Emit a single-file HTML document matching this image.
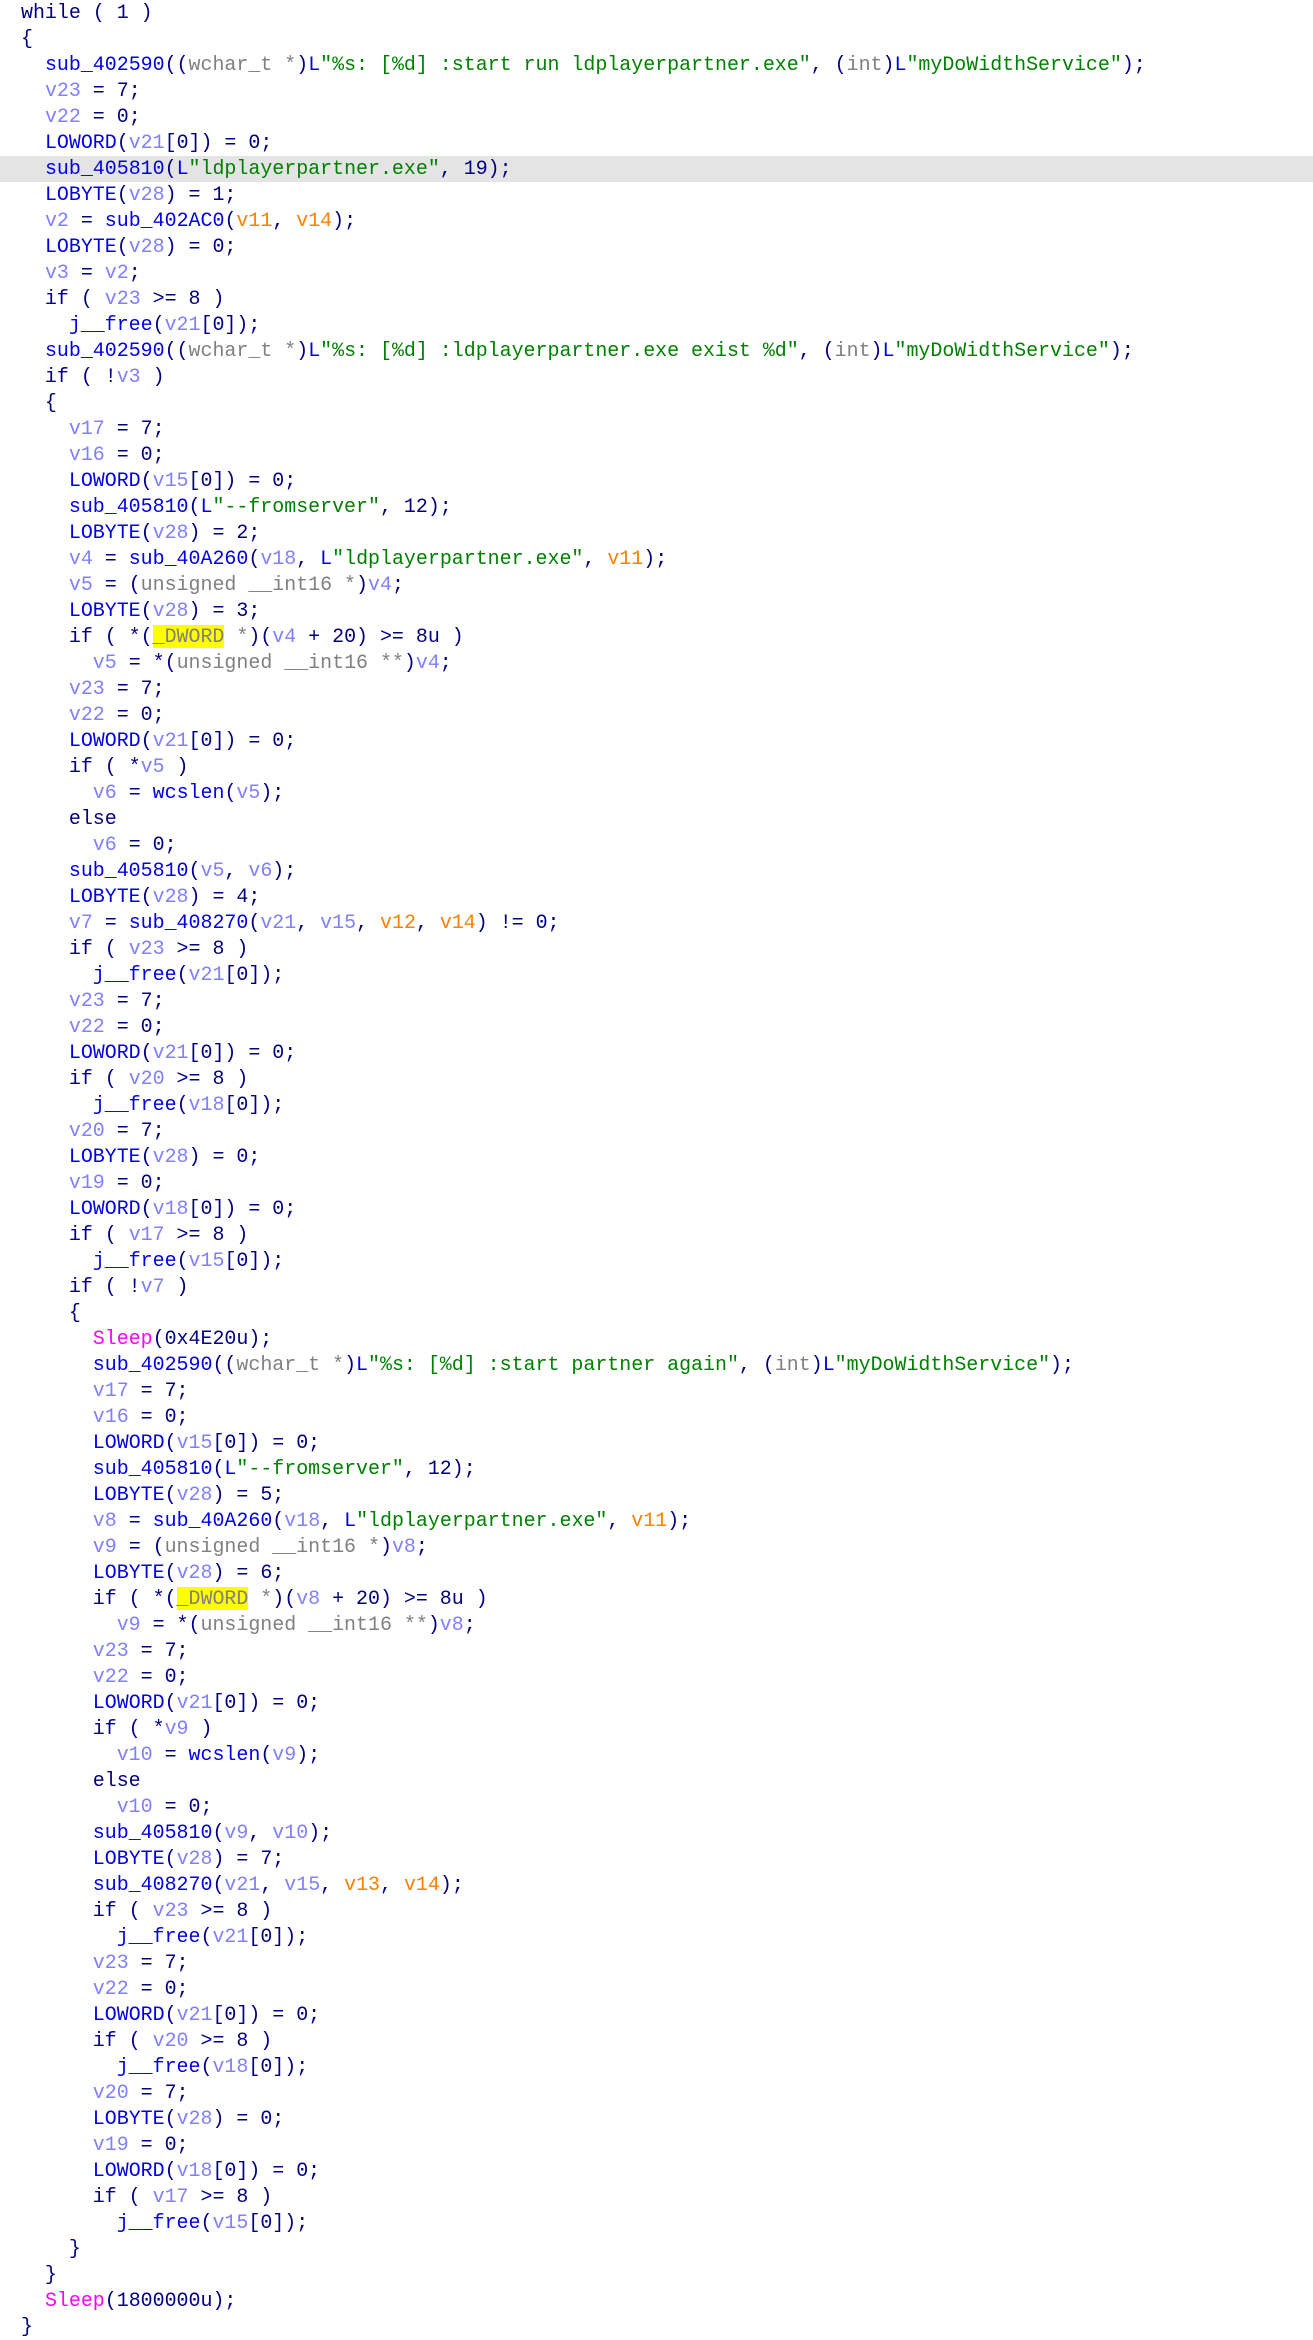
<!DOCTYPE html>
<html><head><meta charset="utf-8"><style>
body{margin:0;background:#fff;width:1313px;height:2327px;overflow:hidden;position:relative}
.hl{position:absolute;left:0;top:156px;width:1313px;height:26px;background:#e4e4e4}
pre{position:absolute;left:21px;top:0;margin:0;font-family:"Liberation Mono",monospace;font-size:19.95px;line-height:26px;color:#000080}
.f{color:#0000e6}.v{color:#8080ff}.s{color:#008000}.a{color:#ff8000}.t{color:#808080}.m{color:#ff00ff}.y{background:#ffff00;color:#808080}
</style></head><body><div class="hl"></div><pre>while ( 1 )
{
  <span class="f">sub_402590</span>((<span class="t">wchar_t *</span>)<span class="f">L</span><span class="s">"%s: [%d] :start run ldplayerpartner.exe"</span>, (<span class="t">int</span>)<span class="f">L</span><span class="s">"myDoWidthService"</span>);
  <span class="v">v23</span> = 7;
  <span class="v">v22</span> = 0;
  <span class="f">LOWORD</span>(<span class="v">v21</span>[0]) = 0;
  <span class="f">sub_405810</span>(<span class="f">L</span><span class="s">"ldplayerpartner.exe"</span>, 19);
  <span class="f">LOBYTE</span>(<span class="v">v28</span>) = 1;
  <span class="v">v2</span> = <span class="f">sub_402AC0</span>(<span class="a">v11</span>, <span class="a">v14</span>);
  <span class="f">LOBYTE</span>(<span class="v">v28</span>) = 0;
  <span class="v">v3</span> = <span class="v">v2</span>;
  if ( <span class="v">v23</span> &gt;= 8 )
    <span class="f">j__free</span>(<span class="v">v21</span>[0]);
  <span class="f">sub_402590</span>((<span class="t">wchar_t *</span>)<span class="f">L</span><span class="s">"%s: [%d] :ldplayerpartner.exe exist %d"</span>, (<span class="t">int</span>)<span class="f">L</span><span class="s">"myDoWidthService"</span>);
  if ( !<span class="v">v3</span> )
  {
    <span class="v">v17</span> = 7;
    <span class="v">v16</span> = 0;
    <span class="f">LOWORD</span>(<span class="v">v15</span>[0]) = 0;
    <span class="f">sub_405810</span>(<span class="f">L</span><span class="s">"--fromserver"</span>, 12);
    <span class="f">LOBYTE</span>(<span class="v">v28</span>) = 2;
    <span class="v">v4</span> = <span class="f">sub_40A260</span>(<span class="v">v18</span>, <span class="f">L</span><span class="s">"ldplayerpartner.exe"</span>, <span class="a">v11</span>);
    <span class="v">v5</span> = (<span class="t">unsigned __int16 *</span>)<span class="v">v4</span>;
    <span class="f">LOBYTE</span>(<span class="v">v28</span>) = 3;
    if ( *(<span class="y">_DWORD</span><span class="t"> *</span>)(<span class="v">v4</span> + 20) &gt;= 8u )
      <span class="v">v5</span> = *(<span class="t">unsigned __int16 **</span>)<span class="v">v4</span>;
    <span class="v">v23</span> = 7;
    <span class="v">v22</span> = 0;
    <span class="f">LOWORD</span>(<span class="v">v21</span>[0]) = 0;
    if ( *<span class="v">v5</span> )
      <span class="v">v6</span> = <span class="f">wcslen</span>(<span class="v">v5</span>);
    else
      <span class="v">v6</span> = 0;
    <span class="f">sub_405810</span>(<span class="v">v5</span>, <span class="v">v6</span>);
    <span class="f">LOBYTE</span>(<span class="v">v28</span>) = 4;
    <span class="v">v7</span> = <span class="f">sub_408270</span>(<span class="v">v21</span>, <span class="v">v15</span>, <span class="a">v12</span>, <span class="a">v14</span>) != 0;
    if ( <span class="v">v23</span> &gt;= 8 )
      <span class="f">j__free</span>(<span class="v">v21</span>[0]);
    <span class="v">v23</span> = 7;
    <span class="v">v22</span> = 0;
    <span class="f">LOWORD</span>(<span class="v">v21</span>[0]) = 0;
    if ( <span class="v">v20</span> &gt;= 8 )
      <span class="f">j__free</span>(<span class="v">v18</span>[0]);
    <span class="v">v20</span> = 7;
    <span class="f">LOBYTE</span>(<span class="v">v28</span>) = 0;
    <span class="v">v19</span> = 0;
    <span class="f">LOWORD</span>(<span class="v">v18</span>[0]) = 0;
    if ( <span class="v">v17</span> &gt;= 8 )
      <span class="f">j__free</span>(<span class="v">v15</span>[0]);
    if ( !<span class="v">v7</span> )
    {
      <span class="m">Sleep</span>(0x4E20u);
      <span class="f">sub_402590</span>((<span class="t">wchar_t *</span>)<span class="f">L</span><span class="s">"%s: [%d] :start partner again"</span>, (<span class="t">int</span>)<span class="f">L</span><span class="s">"myDoWidthService"</span>);
      <span class="v">v17</span> = 7;
      <span class="v">v16</span> = 0;
      <span class="f">LOWORD</span>(<span class="v">v15</span>[0]) = 0;
      <span class="f">sub_405810</span>(<span class="f">L</span><span class="s">"--fromserver"</span>, 12);
      <span class="f">LOBYTE</span>(<span class="v">v28</span>) = 5;
      <span class="v">v8</span> = <span class="f">sub_40A260</span>(<span class="v">v18</span>, <span class="f">L</span><span class="s">"ldplayerpartner.exe"</span>, <span class="a">v11</span>);
      <span class="v">v9</span> = (<span class="t">unsigned __int16 *</span>)<span class="v">v8</span>;
      <span class="f">LOBYTE</span>(<span class="v">v28</span>) = 6;
      if ( *(<span class="y">_DWORD</span><span class="t"> *</span>)(<span class="v">v8</span> + 20) &gt;= 8u )
        <span class="v">v9</span> = *(<span class="t">unsigned __int16 **</span>)<span class="v">v8</span>;
      <span class="v">v23</span> = 7;
      <span class="v">v22</span> = 0;
      <span class="f">LOWORD</span>(<span class="v">v21</span>[0]) = 0;
      if ( *<span class="v">v9</span> )
        <span class="v">v10</span> = <span class="f">wcslen</span>(<span class="v">v9</span>);
      else
        <span class="v">v10</span> = 0;
      <span class="f">sub_405810</span>(<span class="v">v9</span>, <span class="v">v10</span>);
      <span class="f">LOBYTE</span>(<span class="v">v28</span>) = 7;
      <span class="f">sub_408270</span>(<span class="v">v21</span>, <span class="v">v15</span>, <span class="a">v13</span>, <span class="a">v14</span>);
      if ( <span class="v">v23</span> &gt;= 8 )
        <span class="f">j__free</span>(<span class="v">v21</span>[0]);
      <span class="v">v23</span> = 7;
      <span class="v">v22</span> = 0;
      <span class="f">LOWORD</span>(<span class="v">v21</span>[0]) = 0;
      if ( <span class="v">v20</span> &gt;= 8 )
        <span class="f">j__free</span>(<span class="v">v18</span>[0]);
      <span class="v">v20</span> = 7;
      <span class="f">LOBYTE</span>(<span class="v">v28</span>) = 0;
      <span class="v">v19</span> = 0;
      <span class="f">LOWORD</span>(<span class="v">v18</span>[0]) = 0;
      if ( <span class="v">v17</span> &gt;= 8 )
        <span class="f">j__free</span>(<span class="v">v15</span>[0]);
    }
  }
  <span class="m">Sleep</span>(1800000u);
}</pre></body></html>
